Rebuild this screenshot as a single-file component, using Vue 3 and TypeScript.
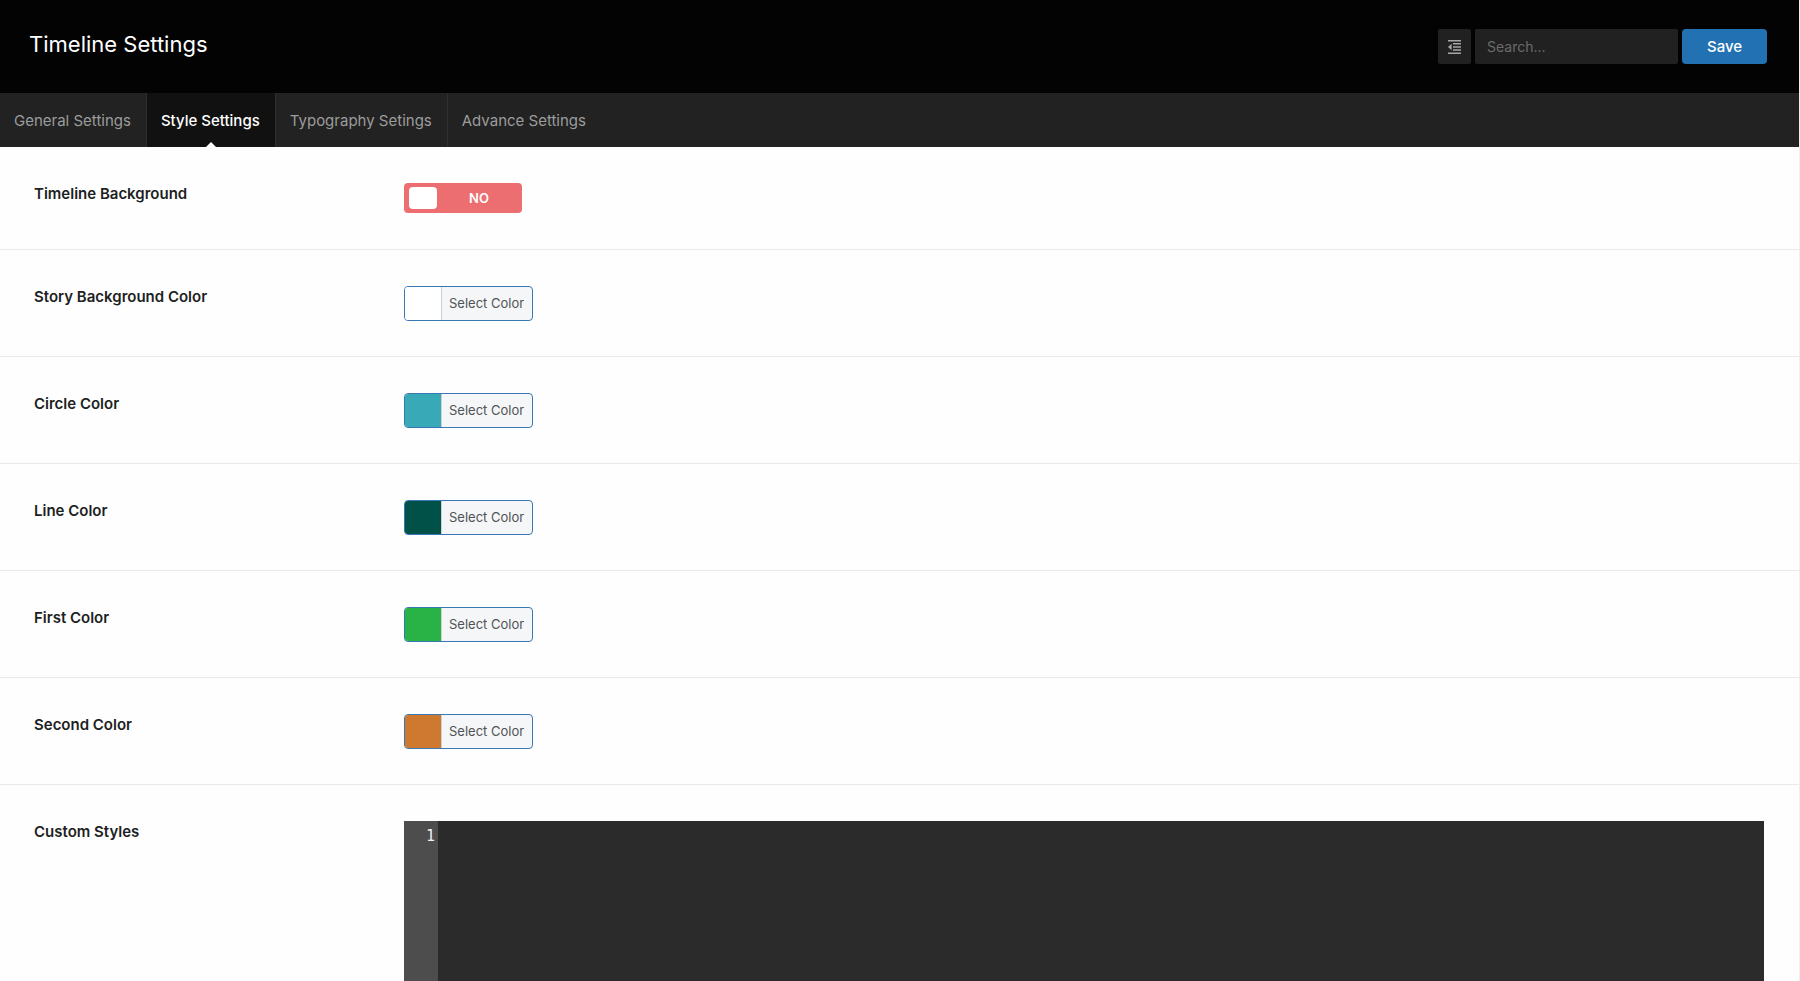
<script setup lang="ts">
import { ref } from 'vue'

interface Tab {
  id: string
  label: string
}

interface ColorField {
  id: string
  label: string
  value: string
}

const tabs: Tab[] = [
  { id: 'general', label: 'General Settings' },
  { id: 'style', label: 'Style Settings' },
  { id: 'typography', label: 'Typography Setings' },
  { id: 'advance', label: 'Advance Settings' },
]

const colorFields: ColorField[] = [
  { id: 'story-background', label: 'Story Background Color', value: '#ffffff' },
  { id: 'circle', label: 'Circle Color', value: '#38aab7' },
  { id: 'line', label: 'Line Color', value: '#025149' },
  { id: 'first', label: 'First Color', value: '#29b246' },
  { id: 'second', label: 'Second Color', value: '#ce792f' },
]

const activeTab = ref('style')
const search = ref('')
const timelineBackground = ref(false)
const customStyles = ref('')
</script>

<template>
  <form class="settings" @submit.prevent>
    <header class="header">
      <h1 class="title">Timeline Settings</h1>
      <div class="actions">
        <button type="button" class="expand" aria-label="Show all settings">
          <svg width="15" height="14" viewBox="0 0 15 14" aria-hidden="true">
            <path
              d="M1 0h13v1.600H1zM6 3.100h8v1.500H6zM6 6.200h8v1.600H6zM6 9.300h8v1.500H6zM1 12.400h13v1.600H1zM1 7l3.600-3.200v6.400z"
              fill="currentColor"
            />
          </svg>
        </button>
        <input
          v-model="search"
          class="search"
          type="text"
          placeholder="Search..."
          aria-label="Search settings"
        />
        <button type="submit" class="save">Save</button>
      </div>
    </header>

    <nav class="tabs">
      <a
        v-for="tab in tabs"
        :key="tab.id"
        :href="`#${tab.id}`"
        class="tab"
        :class="{ active: tab.id === activeTab }"
        @click.prevent="activeTab = tab.id"
        >{{ tab.label }}</a
      >
    </nav>

    <main class="fields">
      <div class="field">
        <label class="label" for="timeline-background">Timeline Background</label>
        <div class="switch" :class="{ on: timelineBackground }">
          <input
            id="timeline-background"
            v-model="timelineBackground"
            class="switch-input"
            type="checkbox"
          />
          <span class="knob"></span>
          <span class="state">{{ timelineBackground ? 'YES' : 'NO' }}</span>
        </div>
      </div>

      <div v-for="field in colorFields" :key="field.id" class="field">
        <label class="label" :for="field.id">{{ field.label }}</label>
        <button :id="field.id" type="button" class="picker">
          <span class="swatch" :style="{ backgroundColor: field.value }"></span>
          <span class="picker-text">Select Color</span>
        </button>
      </div>

      <div class="field editor-field">
        <label class="label" for="custom-styles">Custom Styles</label>
        <div class="editor">
          <div class="gutter">1</div>
          <textarea
            id="custom-styles"
            v-model="customStyles"
            class="code"
            spellcheck="false"
          ></textarea>
        </div>
      </div>
    </main>
  </form>
</template>

<style>
body {
  margin: 0;
  background: #fefefe;
}
</style>

<style scoped>
.settings,
.settings * {
  box-sizing: border-box;
}

.settings {
  display: flex;
  flex-direction: column;
  min-height: 100vh;
  border-right: 1px solid #eeeeee;
  color: #1d1f22;
  font-family: Inter, 'Liberation Sans', sans-serif;
  font-size: 15px;
}

button,
input,
textarea {
  margin: 0;
  border: 0;
  font-family: inherit;
}

button {
  cursor: pointer;
}

.header {
  display: flex;
  justify-content: space-between;
  align-items: flex-start;
  padding: 29px 32px 29px 29px;
  background: #030303;
}

.title {
  margin: 0;
  color: #ffffff;
  font-size: 22px;
  font-weight: 400;
  line-height: 30px;
}

.actions {
  display: flex;
  gap: 4px;
  height: 35px;
}

.expand {
  display: grid;
  place-items: center;
  width: 33px;
  padding: 0;
  border-radius: 2px;
  background: #212121;
  color: #a5a5a5;
}

.search {
  width: 203px;
  padding: 0 12px;
  border-radius: 2px;
  outline: 0;
  background: #212121;
  color: #dddddd;
  font-size: 14px;
}

.search::placeholder {
  color: #6b6b6b;
  opacity: 1;
}

.save {
  width: 85px;
  padding: 0;
  border-radius: 4px;
  background: #2272b3;
  color: #ffffff;
  font-size: 15px;
  font-weight: 500;
}

.tabs {
  display: flex;
  background: #222222;
}

.tab {
  position: relative;
  padding: 2px 15px 0 14px;
  border-right: 1px solid #2f2f2f;
  color: #9c9c9c;
  font-size: 15px;
  line-height: 52px;
  text-decoration: none;
}

.tab:last-child {
  border-right: 0;
}

.tab.active {
  background: #111111;
  color: #ffffff;
  font-weight: 500;
}

.tab.active::after {
  position: absolute;
  bottom: 0;
  left: 50%;
  border: 5px solid transparent;
  border-top: 0;
  border-bottom-color: #fefefe;
  content: '';
  transform: translateX(-50%);
}

.fields {
  display: flex;
  flex: 1;
  flex-direction: column;
}

.field {
  display: grid;
  grid-template-columns: 370px 1fr;
  justify-items: start;
  align-items: start;
  padding: 36px 35px 35px 34px;
  border-bottom: 1px solid #e9e9e9;
}

.label {
  font-size: 15px;
  font-weight: 600;
  line-height: 22px;
}

.switch {
  position: relative;
  display: flex;
  align-items: center;
  width: 118px;
  height: 30px;
  margin-bottom: 1px;
  padding: 0 5px;
  border-radius: 4px;
  background: #ec6e70;
  color: #ffffff;
}

.switch.on {
  flex-direction: row-reverse;
  background: #4fb845;
}

.switch-input {
  position: absolute;
  inset: 0;
  width: 100%;
  height: 100%;
  opacity: 0;
  cursor: pointer;
}

.knob {
  width: 28px;
  height: 22px;
  border-radius: 4px;
  background: #ffffff;
}

.state {
  flex: 1;
  padding-left: 4px;
  font-size: 13px;
  font-weight: 600;
  text-align: center;
}

.picker {
  display: flex;
  height: 35px;
  padding: 0;
  overflow: hidden;
  border: 1px solid #3877b4;
  border-radius: 4px;
  background: #f5f6f7;
  color: #505356;
}

.swatch {
  width: 37px;
  height: 100%;
  border-right: 1px solid #cdd0d3;
}

.picker-text {
  padding: 0 8px 0 7px;
  font-size: 13px;
  line-height: 33px;
}

.editor-field {
  flex: 1;
  align-items: stretch;
  justify-items: stretch;
  padding-bottom: 0;
  border-bottom: 0;
}

.editor {
  display: flex;
  background: #2b2b2b;
  font-family: 'DejaVu Sans Mono', monospace;
  font-size: 15px;
  line-height: 22px;
}

.gutter {
  width: 34px;
  padding: 4px 3px;
  background: #4d4d4d;
  color: #f0f0f0;
  text-align: right;
}

.code {
  flex: 1;
  padding: 4px;
  outline: 0;
  resize: none;
  background: transparent;
  color: #f8f8f2;
  font-family: inherit;
  font-size: inherit;
  line-height: inherit;
}
</style>
